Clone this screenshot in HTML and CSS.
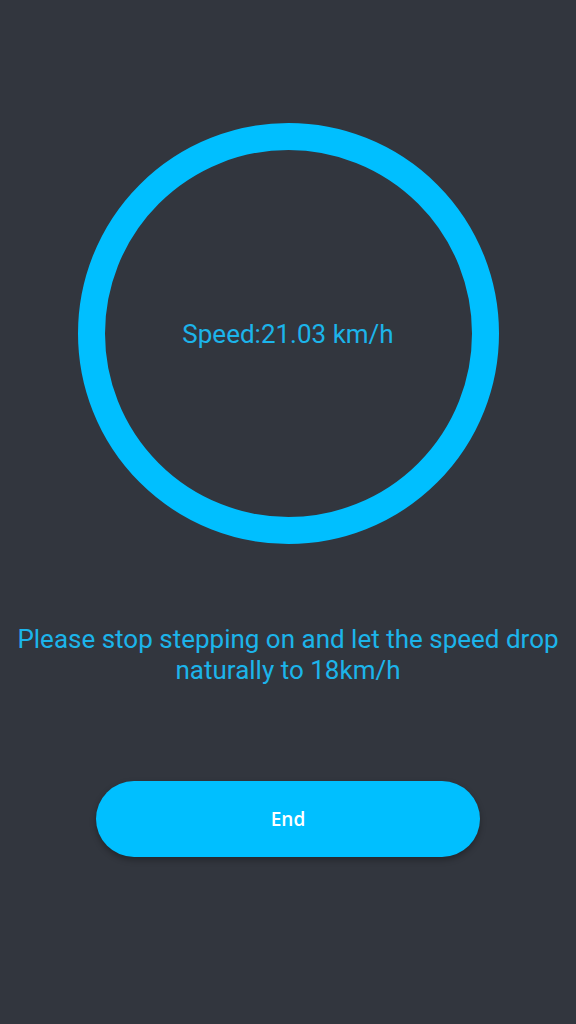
FILE: index.html
```html
<!DOCTYPE html>
<html lang="en">
  <head>
    <meta charset="UTF-8" />
    <meta name="viewport" content="width=device-width, initial-scale=1.0" />
    <title>Speed test</title>
    <link rel="stylesheet" href="styles.css">
  </head>
  <body>
    <main class="screen">
      <div class="gauge">
        <p class="gauge-text">Speed:21.03 km/h</p>
      </div>
      <p class="hint">
        Please stop stepping on and let the speed drop naturally to 18km/h
      </p>
      <button type="button" class="end-btn">End</button>
    </main>
  </body>
</html>
```

FILE: styles.css
```css
body {
  margin: 0;
  background-color: #32363e;
  font-family: Roboto, "Liberation Sans", sans-serif;
}

.screen {
  min-height: 1024px;
  display: flex;
  flex-direction: column;
  align-items: center;
  padding-top: 123px;
  box-sizing: border-box;
}

.gauge {
  width: 421px;
  height: 421px;
  box-sizing: border-box;
  border: 27px solid #00bfff;
  border-radius: 50%;
  display: flex;
  align-items: center;
  justify-content: center;
}

.gauge-text {
  margin: 0;
  color: #1cb4ea;
  font-size: 26px;
}

.hint {
  margin: 80px 0 0;
  padding: 0 6px;
  text-align: center;
  color: #1cb4ea;
  font-size: 26px;
  line-height: 31px;
}

.end-btn {
  margin-top: 95px;
  width: 384px;
  height: 76px;
  border: none;
  border-radius: 38px;
  background-color: #00bfff;
  color: white;
  font-family: "Open Sans", "Noto Sans", sans-serif;
  font-weight: 600;
  font-size: 19px;
  box-shadow: 0 3px 6px rgba(0, 0, 0, 0.3);
}
```
